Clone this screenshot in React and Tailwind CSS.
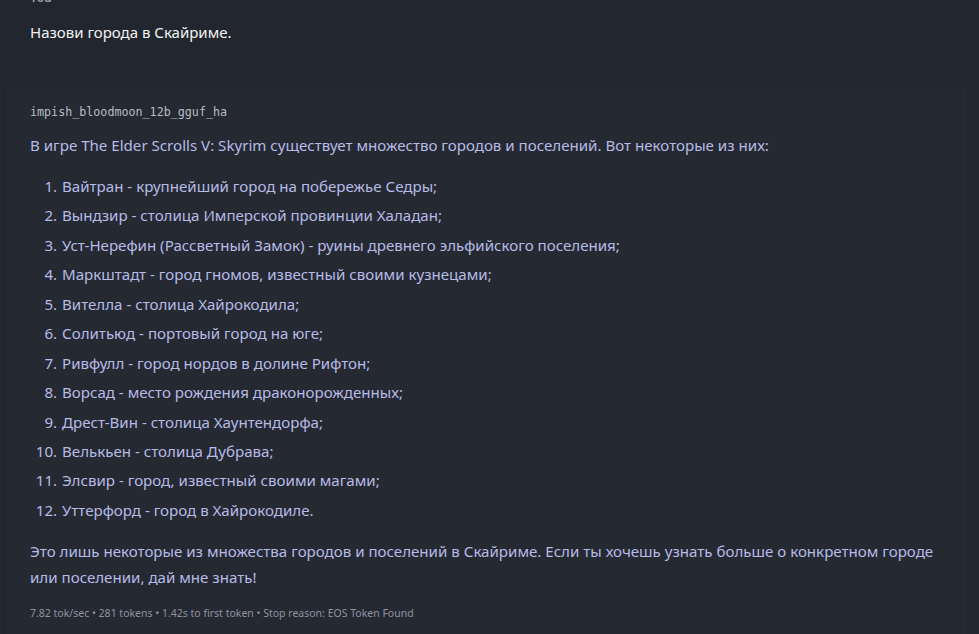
import React from "react";

const items = [
  "Вайтран - крупнейший город на побережье Седры;",
  "Вындзир - столица Имперской провинции Халадан;",
  "Уст-Нерефин (Рассветный Замок) - руины древнего эльфийского поселения;",
  "Маркштадт - город гномов, известный своими кузнецами;",
  "Вителла - столица Хайрокодила;",
  "Солитьюд - портовый город на юге;",
  "Ривфулл - город нордов в долине Рифтон;",
  "Ворсад - место рождения драконорожденных;",
  "Дрест-Вин - столица Хаунтендорфа;",
  "Велькьен - столица Дубрава;",
  "Элсвир - город, известный своими магами;",
  "Уттерфорд - город в Хайрокодиле.",
];

export default function App() {
  return (
    <div
      className="w-[979px] h-[634px] overflow-hidden bg-[#22262f] flex flex-col"
      style={{ fontFamily: '"Noto Sans", "Open Sans", sans-serif' }}
    >
      <div className="pl-[30px] h-[88px] shrink-0 flex flex-col">
        <div className="h-[6px] overflow-hidden relative">
          <div className="absolute bottom-0 left-0 text-[12px] font-semibold text-[#9aa0ac] leading-[16px]">You</div>
        </div>
        <div className="mt-[16px] text-[15px] leading-[20px] text-[#f2f3f5]">Назови города в Скайриме.</div>
      </div>
      <div className="ml-[7px] mr-[12px] flex-1 bg-[#252932] pl-[23px] pt-[16px]">
        <div
          className="text-[11.7px] leading-[16px] text-[#b9bcc6] font-medium"
          style={{ fontFamily: '"DejaVu Sans Mono", "Liberation Mono", monospace' }}
        >
          impish_bloodmoon_12b_gguf_ha
        </div>
        <div className="mt-[15px] text-[15.1px] leading-[20px] text-[#b7bbe6]">
          В игре The Elder Scrolls V: Skyrim существует множество городов и поселений. Вот некоторые из них:
        </div>
        <ol className="mt-[21px] list-decimal pl-[31px] text-[15.1px] leading-[20px] text-[#b7bbe6] flex flex-col gap-[9.45px]">
          {items.map((t, i) => (
            <li key={i} className="pl-[1px]">{t}</li>
          ))}
        </ol>
        <div className="mt-[18px] text-[15.1px] leading-[26px] text-[#b7bbe6] pr-[20px]">
          Это лишь некоторые из множества городов и поселений в Скайриме. Если ты хочешь узнать больше о конкретном городе или поселении, дай мне знать!
        </div>
        <div className="mt-[15px] text-[10.5px] leading-[16px] text-[#8e93a0]">
          7.82 tok/sec • 281 tokens • 1.42s to first token • Stop reason: EOS Token Found
        </div>
      </div>
    </div>
  );
}
